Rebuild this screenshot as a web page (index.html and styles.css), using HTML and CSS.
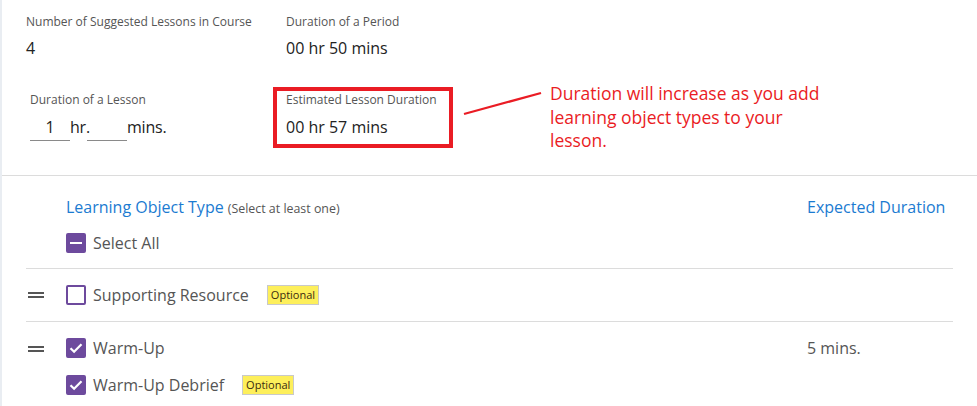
FILE: index.html
```html
<!DOCTYPE html>
<html>
<head>
<meta charset="utf-8">
<link rel="stylesheet" href="styles.css">
</head>
<body>
<div class="page">
  <section class="summary">
    <div class="field">
      <div class="label">Number of Suggested Lessons in Course</div>
      <div class="value">4</div>
    </div>
    <div class="field">
      <div class="label">Duration of a Period</div>
      <div class="value">00 hr 50 mins</div>
    </div>
    <div class="field lesson">
      <div class="label">Duration of a Lesson</div>
      <div class="inputs">
        <span class="inp">1</span><span class="unit unit-hr">hr.</span><span class="inp"></span><span class="unit">mins.</span>
      </div>
    </div>
    <div class="field highlight">
      <div class="label">Estimated Lesson Duration</div>
      <div class="value">00 hr 57 mins</div>
    </div>
    <div class="note">
      <svg class="pointer" width="90" height="30" viewBox="0 0 90 30"><line x1="2" y1="24" x2="79" y2="3" stroke="#ea1c24" stroke-width="2.2"/></svg>
      <p class="note-text">Duration will increase as you add learning object types to your lesson.</p>
    </div>
  </section>

  <section class="types">
    <div class="types-head">
      <div class="head-main">
        <div class="title"><span class="title-main">Learning Object Type</span> <span class="title-sub">(Select at least one)</span></div>
        <div class="item">
          <span class="cb cb-mixed"></span><span class="item-label">Select All</span>
        </div>
      </div>
      <div class="duration-col title-main">Expected Duration</div>
    </div>

    <div class="row">
      <div class="handle"><span></span><span></span></div>
      <div class="row-items">
        <div class="item">
          <span class="cb"></span><span class="item-label">Supporting Resource</span><span class="badge">Optional</span>
        </div>
      </div>
      <div class="duration-col"></div>
    </div>

    <div class="row row-group">
      <div class="handle"><span></span><span></span></div>
      <div class="row-items">
        <div class="item">
          <span class="cb cb-checked"><svg width="20" height="20" viewBox="0 0 20 20"><path d="M4.5 10.2l3.6 3.6 7.4-7.6" fill="none" stroke="#fff" stroke-width="2.2"/></svg></span><span class="item-label">Warm-Up</span>
        </div>
        <div class="item">
          <span class="cb cb-checked"><svg width="20" height="20" viewBox="0 0 20 20"><path d="M4.5 10.2l3.6 3.6 7.4-7.6" fill="none" stroke="#fff" stroke-width="2.2"/></svg></span><span class="item-label">Warm-Up Debrief</span><span class="badge">Optional</span>
        </div>
      </div>
      <div class="duration-col dur-value">5 mins.</div>
    </div>
  </section>
</div>
</body>
</html>
```

FILE: styles.css
```css
* { box-sizing: border-box; }
html, body { margin: 0; padding: 0; background: #fff; }
body {
  font-family: "Open Sans", "Noto Sans", sans-serif;
  color: #222;
  overflow: hidden;
}
.page {
  width: 977px;
  height: 406px;
  border-left: 2px solid #e9edf2;
  overflow: hidden;
}

/* ---------- summary ---------- */
.summary {
  position: relative;
  display: grid;
  grid-template-columns: 260px 180px;
  grid-template-rows: 73px 89px;
  padding: 14px 0 0 24px;
  height: 176px;
  border-bottom: 1px solid #dcdcdc;
}
.field { display: flex; flex-direction: column; }
.label {
  font-size: 12px;
  line-height: 16px;
  color: #555;
  white-space: nowrap;
}
.value {
  margin-top: 7px;
  font-size: 16px;
  line-height: 22px;
  color: #222;
  white-space: nowrap;
}
.lesson { padding: 5px 0 0 4px; }
.inputs {
  margin-top: 8px;
  display: flex;
  align-items: flex-start;
  font-size: 16px;
  line-height: 22px;
  color: #222;
}
.inp {
  width: 40px;
  height: 25px;
  border-bottom: 1px solid #8a8a8a;
  text-align: center;
}
.unit-hr { width: 17px; }
.unit { margin-left: 0; letter-spacing: -0.2px; }
.highlight {
  margin-left: -13px;
  width: 180px;
  height: 61px;
  border: 4px solid #ea1c24;
  padding: 1px 0 0 9px;
}
.highlight .value { margin-top: 8px; }

.note {
  position: absolute;
  left: 460px;
  top: 82px;
  display: flex;
  align-items: flex-start;
}
.pointer { margin-top: 8px; flex: none; }
.note-text {
  margin: 0 0 0 -2px;
  width: 292px;
  font-family: "Open Sans", sans-serif;
  font-size: 17.5px;
  line-height: 23.5px;
  color: #ea1c24;
}

/* ---------- types ---------- */
.types { padding: 0 24px 0 24px; }
.types-head {
  display: flex;
  padding: 20px 0 15px 40px;
  border-bottom: 1px solid #dcdcdc;
}
.head-main { flex: 1; display: flex; flex-direction: column; gap: 13px; }
.title { line-height: 22px; }
.title-main { font-size: 16px; color: #1b7bd1; }
.title-sub { font-size: 12.4px; color: #555; }
.types-head .duration-col { line-height: 22px; }
.duration-col { width: 146px; flex: none; font-size: 16px; }
.dur-value { color: #555; line-height: 20px; }

.row {
  display: flex;
  align-items: center;
  height: 53px;
  border-bottom: 1px solid #dcdcdc;
}
.row-group {
  align-items: flex-start;
  height: auto;
  padding-top: 16px;
  border-bottom: none;
}
.row-items { flex: 1; display: flex; flex-direction: column; gap: 17px; }
.handle {
  width: 40px;
  flex: none;
  display: flex;
  flex-direction: column;
  gap: 2px;
  padding-left: 2px;
}
.row-group .handle { padding-top: 8px; }
.handle span {
  display: block;
  width: 16px;
  height: 2px;
  background: #555;
}

.item { display: flex; align-items: center; height: 20px; }
.cb {
  width: 20px;
  height: 20px;
  flex: none;
  border: 2px solid #6d4a9d;
  border-radius: 2px;
  background: #fff;
  position: relative;
}
.cb-checked, .cb-mixed { background: #6d4a9d; }
.cb svg { position: absolute; left: -2px; top: -2px; }
.cb-mixed::after {
  content: "";
  position: absolute;
  left: 2px;
  right: 2px;
  top: 7px;
  height: 2px;
  background: #fff;
}
.item-label {
  margin-left: 7px;
  font-size: 16px;
  line-height: 20px;
  color: #555;
  white-space: nowrap;
}
.badge {
  margin-left: 18px;
  height: 20px;
  padding: 0 3px;
  background: #fdef5b;
  border: 1px solid #c9c9c9;
  font-size: 11px;
  line-height: 18px;
  color: #3a2a10;
}
```
